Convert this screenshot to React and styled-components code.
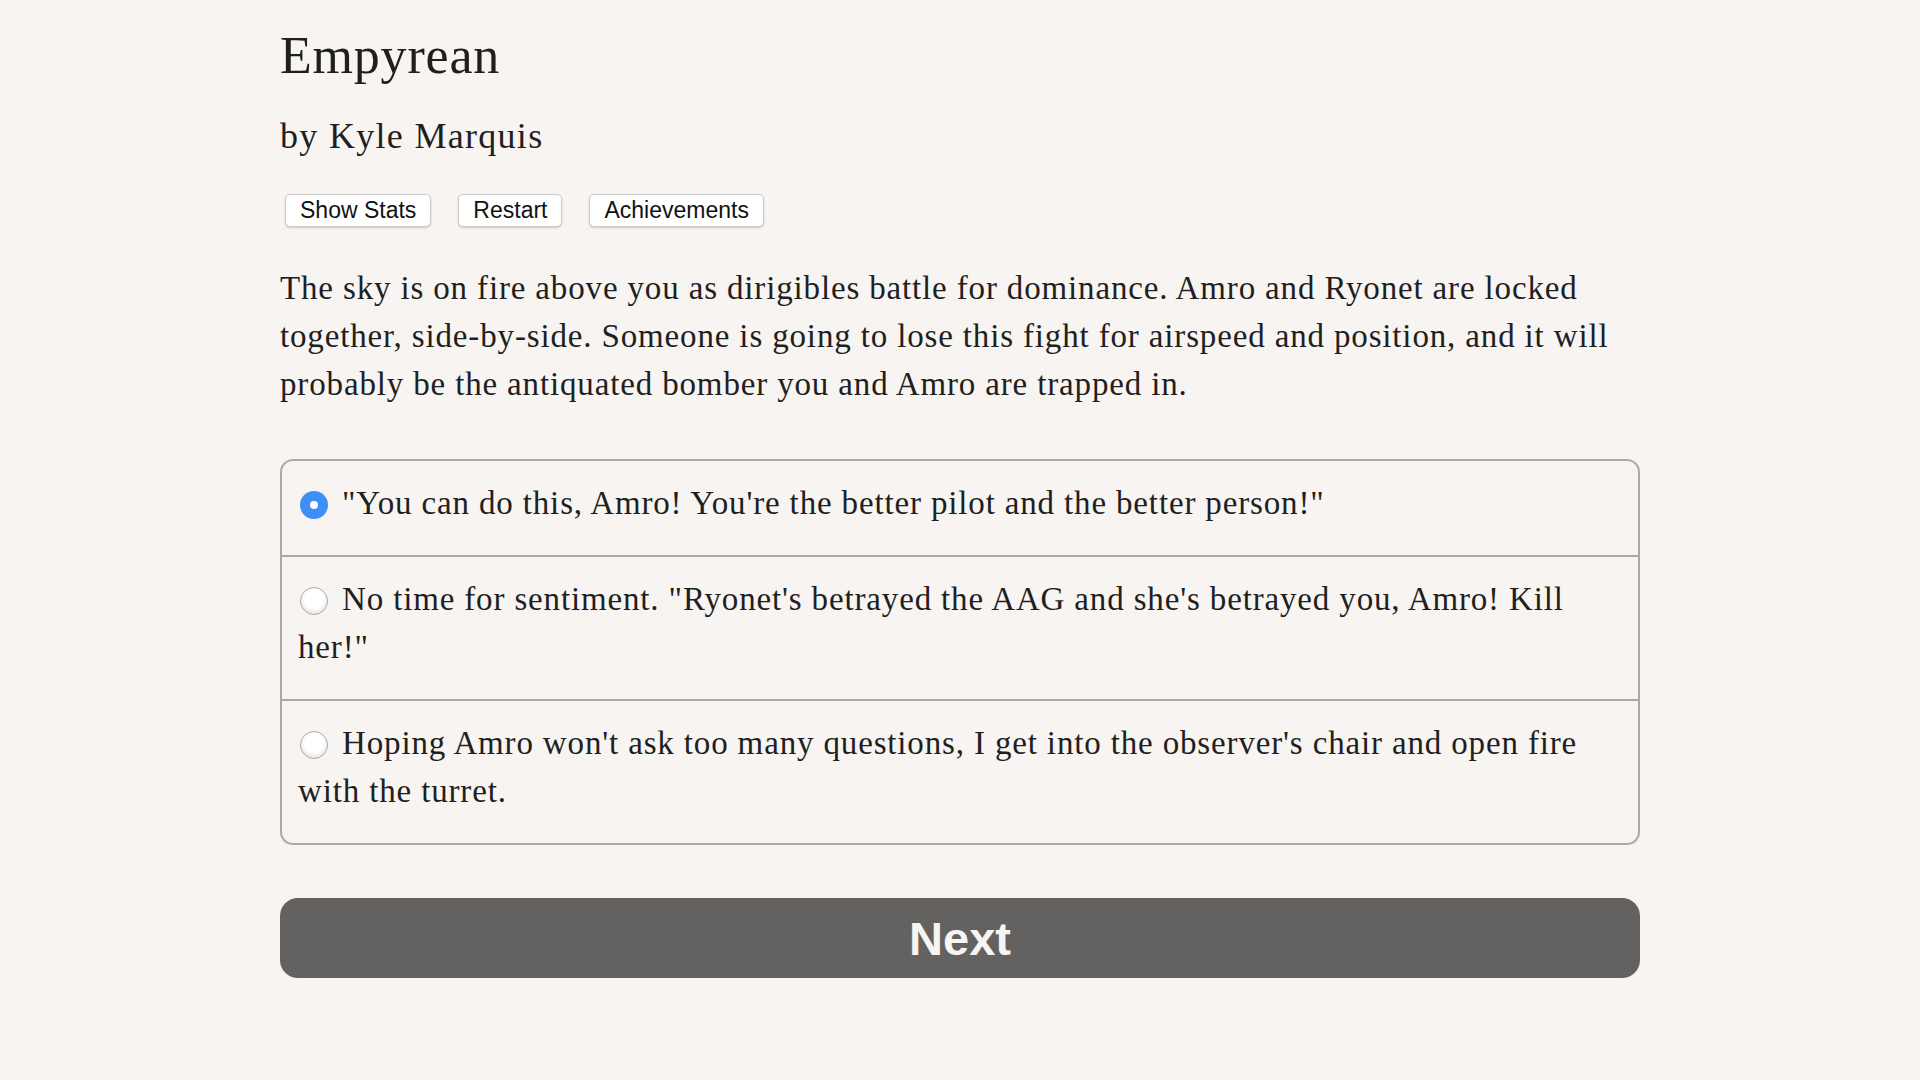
import React from "react"
import styled, { createGlobalStyle } from "styled-components"

const GlobalStyle = createGlobalStyle`
  html, body {
    margin: 0;
    padding: 0;
    background: #f7f4f1;
  }
  body {
    font-family: "Palatino Linotype", "Book Antiqua", Palatino, "Liberation Serif", serif;
    color: #1f1f1f;
  }
`

const choices = [
  `"You can do this, Amro! You're the better pilot and the better person!"`,
  `No time for sentiment. "Ryonet's betrayed the AAG and she's betrayed you, Amro! Kill her!"`,
  `Hoping Amro won't ask too many questions, I get into the observer's chair and open fire with the turret.`,
]

function App() {
  const [selected, setSelected] = React.useState(0)

  return (
    <Page>
      <GlobalStyle />
      <Main>
        <Title>Empyrean</Title>
        <Author>by Kyle Marquis</Author>
        <Toolbar>
          <SmallButton>Show Stats</SmallButton>
          <SmallButton>Restart</SmallButton>
          <SmallButton>Achievements</SmallButton>
        </Toolbar>
        <Story>
          The sky is on fire above you as dirigibles battle for dominance. Amro and Ryonet are locked
          together, side-by-side. Someone is going to lose this fight for airspeed and position, and it
          will probably be the antiquated bomber you and Amro are trapped in.
        </Story>
        <ChoiceList>
          {choices.map((text, i) => (
            <Choice key={i} onClick={() => setSelected(i)}>
              <Radio checked={selected === i} />
              {text}
            </Choice>
          ))}
        </ChoiceList>
        <NextButton>Next</NextButton>
      </Main>
    </Page>
  )
}

export default App

const Page = styled.div`
  width: 100%;
  min-height: 100vh;
  background: #f7f4f1;
`

const Main = styled.div`
  width: 1360px;
  margin: 0 auto;
  padding-top: 25px;
`

const Title = styled.h1`
  margin: 0;
  font-size: 52px;
  line-height: 62px;
  font-weight: normal;
  letter-spacing: 0.8px;
`

const Author = styled.h2`
  margin: 28px 0 0;
  font-size: 36px;
  line-height: 42px;
  font-weight: normal;
  letter-spacing: 1.3px;
`

const Toolbar = styled.div`
  display: flex;
  gap: 27px;
  margin-top: 37px;
  padding-left: 5px;
`

const SmallButton = styled.button`
  height: 33px;
  padding: 0 14px;
  background: #fff;
  border: 1px solid #cbcbcb;
  border-radius: 5px;
  box-shadow: 0 1px 2px rgba(0, 0, 0, 0.18);
  font-family: "Liberation Sans", Arial, sans-serif;
  font-size: 23px;
  line-height: 31px;
  color: #111;
  cursor: pointer;
`

const Story = styled.p`
  margin: 37px 0 0;
  font-size: 33px;
  line-height: 48px;
  letter-spacing: 0.85px;
`

const ChoiceList = styled.div`
  margin-top: 51px;
  border: 2px solid #a9a9a9;
  border-radius: 13px;
  overflow: hidden;
`

const Choice = styled.div`
  padding: 18px 16px 28px;
  font-size: 33px;
  line-height: 48px;
  letter-spacing: 0.85px;
  cursor: pointer;

  & + & {
    border-top: 2px solid #a9a9a9;
  }
`

const Radio = styled.span`
  display: inline-block;
  box-sizing: border-box;
  width: 28px;
  height: 28px;
  margin: 0 14px 0 2px;
  vertical-align: -5px;
  border-radius: 50%;
  background: ${(p) => (p.checked ? "#3d8ef6" : "#fff")};
  border: ${(p) => (p.checked ? "none" : "1px solid #a8a8a8")};
  box-shadow: ${(p) => (p.checked ? "none" : "inset 0 -3px 4px rgba(0,0,0,0.1)")};
  position: relative;

  &::after {
    content: "";
    display: ${(p) => (p.checked ? "block" : "none")};
    position: absolute;
    left: 10px;
    top: 10px;
    width: 8px;
    height: 8px;
    border-radius: 50%;
    background: #fff;
  }
`

const NextButton = styled.button`
  display: block;
  width: 100%;
  height: 80px;
  margin-top: 53px;
  background: #636260;
  color: #f7f4f1;
  border: none;
  border-radius: 18px;
  font-family: "Liberation Sans", Arial, sans-serif;
  font-weight: bold;
  font-size: 47px;
  cursor: pointer;
`
